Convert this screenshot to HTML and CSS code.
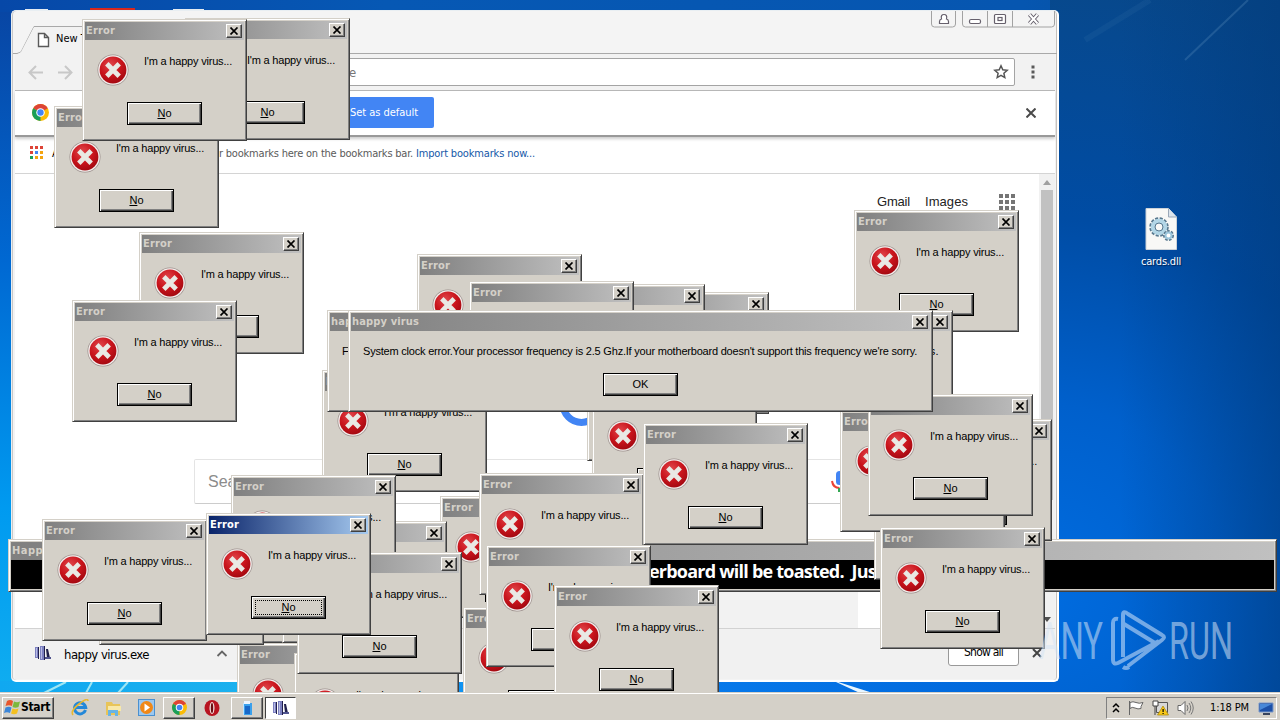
FILE: index.html
```html
<!DOCTYPE html>
<html lang="en">
<head>
<meta charset="utf-8">
<title>Desktop</title>
<link rel="stylesheet" href="styles.css">
</head>
<body>
<svg width="0" height="0" class="defs">
  <defs>
    <radialGradient id="red" cx=".4" cy=".3" r=".75"><stop offset="0" stop-color="#e0454a"/><stop offset=".55" stop-color="#c9141c"/><stop offset="1" stop-color="#a00810"/></radialGradient>
    <symbol id="err" viewBox="0 0 32 32">
      <circle cx="16" cy="16" r="15.5" fill="#9b8f8c"/><circle cx="16" cy="16" r="14.8" fill="#f3eeec"/><circle cx="16" cy="16" r="13.4" fill="url(#red)"/>
      <path d="M9.800 9.800 22.200 22.200M22.200 9.800 9.800 22.200" stroke="#e9e9e4" stroke-width="4.8"/>
    </symbol>
    <symbol id="chrome" viewBox="0 0 16 16">
      <circle cx="8" cy="8" r="8" fill="#fbbc05"/><path d="M8 8 1.1 4A8 8 0 0 1 14.9 4Z" fill="#dd4437"/><path d="M8 8 1.1 4A8 8 0 0 0 8 16Z" fill="#1a9f5a"/><circle cx="8" cy="8" r="4" fill="#fff"/><circle cx="8" cy="8" r="3" fill="#4285f4"/>
    </symbol>
    <symbol id="exe" viewBox="0 0 16 16">
      <path d="M0 2h3v11H0zM5 1h4v14H5z" fill="#7c80c0"/><path d="M3 2h1v12H3zM9 1h1v14H9zM11 4l2 0 2 9h-3z" fill="#20204c"/><path d="M6 2h1v12H6zM1 3h1v9H1z" fill="#b9bce4"/><path d="M10 12h6v2h-6z" fill="#50548e"/>
    </symbol>
  </defs>
</svg>
<div class="desktop">
  <svg class="wall" width="1280" height="720">
    <defs>
      <linearGradient id="lw" x2="0" y2="1"><stop offset="0" stop-color="#0846a4"/><stop offset=".35" stop-color="#0068d2"/><stop offset=".7" stop-color="#009af0"/><stop offset="1" stop-color="#12b0f0"/></linearGradient>
      <linearGradient id="tw"><stop offset="0" stop-color="#0648a8"/><stop offset=".3" stop-color="#0658b4"/><stop offset=".8" stop-color="#0656b0"/><stop offset="1" stop-color="#084a90"/></linearGradient>
      <linearGradient id="bw"><stop offset="0" stop-color="#10a8f0"/><stop offset=".3" stop-color="#20b4ee"/><stop offset=".5" stop-color="#0a84f4"/><stop offset="1" stop-color="#0064d8"/></linearGradient>
      <radialGradient id="rw" gradientUnits="userSpaceOnUse" cx="1040" cy="590" r="620"><stop offset="0" stop-color="#006ce0"/><stop offset=".3" stop-color="#0060cc"/><stop offset=".6" stop-color="#004ca4"/><stop offset="1" stop-color="#08488a"/></radialGradient>
      <linearGradient id="edge"><stop offset="0" stop-color="#003878" stop-opacity="0"/><stop offset="1" stop-color="#003878" stop-opacity=".5"/></linearGradient>
    </defs>
    <rect width="1280" height="720" fill="url(#tw)"/>
    <rect y="12" width="100" height="708" fill="url(#lw)"/>
    <rect x="1050" width="230" height="720" fill="url(#rw)"/>
    <rect x="1120" width="160" height="720" fill="url(#edge)"/>
    <rect y="681" width="1060" height="12" fill="url(#bw)"/>
    <path d="M1185 60 1248 0" stroke="#6fa0c8" stroke-opacity=".25" stroke-width="2"/>
    <path d="M1085 40 1150 0" stroke="#6fa0c8" stroke-opacity=".08" stroke-width="6"/>
    <path d="M832 680 876 694H862L836 682Z" fill="#e8f6ff"/>
    <path d="M44 693 66 682M86 693 92 682M118 693 128 682" stroke="#9fe6f4" stroke-width="2"/>
    <path d="M25 9h23v2H25zM173 9h31v3h-31z" fill="#e6ecf2"/><path d="M90 8h45v4H90z" fill="#d8281c"/>
  </svg>

  <section class="browser">
    <header class="tabs">
      <svg width="1046" height="43">
        <path d="M1 42.5H5L9 41 22 15.500H236L248 42.500H1045" fill="none" stroke="#a9a9a9"/>
        <path d="M6 43 9 41 22 16H236L248 43Z" fill="#f2f2f2"/>
        <path d="M26.500 22.500h6l4 4v9h-10zM32.500 22.500v4h4" fill="#fff" stroke="#5a5a5a" stroke-width="1.400"/>
        <g fill="none" stroke="#a2a2a2"><path d="M919.500 0V13q0 3 3 3h18q3 0 3-3V0M950.500 0V13q0 3 3 3h86q3 0 3-3V0M975.500 0V16M1000.500 0V16"/></g>
        <g fill="#fff" stroke="#66606c" stroke-width="1.200"><path d="M927.500 12.500v-2q0-2 2-2.500-1-4.500 2.500-4.500t2.500 4.500q2 .5 2 2.500v2z"/><rect x="957.500" y="8.500" width="11" height="4" rx="1.500"/><rect x="982.500" y="3.500" width="11" height="9" rx="1"/><rect x="986" y="6.500" width="4" height="3"/></g>
        <path d="m1017.500 3.500 8 9m0-9-8 9" stroke="#66606c" stroke-width="4"/><path d="m1017.500 3.500 8 9m0-9-8 9" stroke="#fff" stroke-width="2"/>
      </svg>
      <span class="tabname">New Tab</span>
    </header>
    <div class="toolbar">
      <svg width="70" height="36"><path d="M29 18.500H16M22 12l-6.500 6.500L22 25M44 18.500H57M51 12l6.500 6.500L51 25" fill="none" stroke="#c8c8c8" stroke-width="2"/></svg>
      <div class="omni"><span>e</span>
        <svg width="16" height="16" viewBox="0 0 16 16"><path d="m8 1.800 1.800 4 4.400.5-3.300 3 .9 4.300L8 11.400l-3.800 2.200.9-4.300-3.300-3 4.400-.5z" fill="none" stroke="#555" stroke-width="1.500"/></svg>
      </div>
      <svg class="dots" width="4" height="16"><path d="M.500 1.500h3v3h-3zM.500 6.500h3v3h-3zM.500 11.500h3v3h-3z" fill="#5a5a5a"/></svg>
    </div>
    <div class="infobar">
      <svg width="17" height="17"><use href="#chrome"/></svg>
      <div class="default"><span data-w="68">Set as default</span></div>
      <svg class="x" width="10" height="10"><path d="m.500.500 9 9m0-9-9 9" stroke="#4a4a4a" stroke-width="2"/></svg>
    </div>
    <div class="bookmarks">
      <svg width="14" height="14"><path d="M0 0h3v3H0zM5 0h3v3H5zM0 5h3v3H0z" fill="#dd4437"/><path d="M10 0h3v3h-3z" fill="#dd4437"/><path d="M5 5h3v3H5z" fill="#4285f4"/><path d="M10 5h3v3h-3zM5 10h3v3H5zM10 10h3v3h-3z" fill="#f4a410"/><path d="M0 10h3v3H0z" fill="#1a9f5a"/></svg>
      <span class="apps">Apps</span>
      <span class="hint" data-w="194">r bookmarks here on the bookmarks bar.</span>
      <span class="import" data-w="119">Import bookmarks now...</span>
    </div>
    <div class="page">
      <div class="canvas">
        <nav><span data-w="33">Gmail</span><span data-w="43">Images</span>
          <svg width="16" height="16"><path d="M0 0h4v4H0zM6 0h4v4H6zM12 0h4v4h-4zM0 6h4v4H0zM6 6h4v4H6zM12 6h4v4h-4zM0 12h4v4H0zM6 12h4v4H6zM12 12h4v4h-4z" fill="#757575"/></svg>
        </nav>
        <svg class="logo" width="60" height="60"><path d="M12 30A18.500 18.500 0 0 0 49 30" fill="none" stroke="#4285f4" stroke-width="7"/></svg>
        <div class="search"><span>Search Google</span>
          <svg width="16" height="24"><rect x="5" y="1" width="7" height="14" rx="3.500" fill="#4285f4"/><path d="M1 11q1 7 7.500 7" fill="none" stroke="#ea4335" stroke-width="2"/><path d="M7 18h3v4H7z" fill="#34a853"/></svg>
        </div>
        <div class="foot"></div>
      </div>
      <div class="scroll"><svg width="16" height="16"><path d="m4 11 4-5 4 5z" fill="#a0a0a0"/></svg><i></i><svg width="16" height="18"><path d="m4 7 4 5 4-5z" fill="#505050"/></svg></div>
    </div>
    <footer class="shelf">
      <svg width="16" height="16"><use href="#exe"/></svg>
      <span class="file" data-w="85">happy virus.exe</span>
      <svg class="chev" width="12" height="8"><path d="m1.500 7 4.500-4.500L10.500 7" fill="none" stroke="#666" stroke-width="1.800"/></svg>
      <div class="all"><span data-w="39">Show all</span></div>
      <svg width="10" height="10"><path d="m1 1 8 8m0-8-8 8" stroke="#444" stroke-width="2"/></svg>
    </footer>
  </section>

  <figure class="file-icon">
    <svg width="32" height="42" viewBox="0 0 32 42"><path d="M1 .500h22.500L31.500 9v32.500H1z" fill="#f8f8f6" stroke="#ccd2d8"/><path d="M23.500.500V9h8" fill="#dbe4ec" stroke="#9aa8b8"/><circle cx="14" cy="19" r="7" fill="none" stroke="#58788e" stroke-width="5.500" stroke-dasharray="2.500 1.200"/><circle cx="14" cy="19" r="6" fill="#f8f8f6" stroke="#b2d6e6" stroke-width="4.500"/><circle cx="14" cy="19" r="4" fill="none" stroke="#58788e"/><circle cx="23.500" cy="27.500" r="3.500" fill="none" stroke="#58788e" stroke-width="4" stroke-dasharray="2 1"/><circle cx="23.500" cy="27.500" r="3" fill="#fff" stroke="#9cc6dc" stroke-width="2"/></svg>
    <figcaption data-w="40">cards.dll</figcaption>
  </figure>

  <div id="windows"></div>

  <svg class="mark" width="200" height="70" viewBox="0 0 200 70">
    <g fill="#d5e4f5" fill-opacity=".55" font-family="Roboto, sans-serif" font-size="52" font-weight="400"><text x="1" y="54" textLength="64" lengthAdjust="spacingAndGlyphs">ANY</text><text x="131" y="54" textLength="64" lengthAdjust="spacingAndGlyphs">RUN</text></g>
    <path d="M80 15q-5-1-5 4V56q0 5 5 3L121 37M85 53V11q0-5 5-1L124 31q4 2 0 5L90 62M86 20 117 39M85 63q3 2 6 0" transform="translate(0 -1)" fill="none" stroke="#c2daf6" stroke-opacity=".6" stroke-width="4"/>
  </svg>

  <footer class="taskbar">
    <button class="start"><svg width="17" height="17" viewBox="0 0 17 17"><path d="M3 2q3-2 6 0L8 7Q5 5.500 1.500 7z" fill="#e8562c"/><path d="M10 2.500q3 1.500 6 0L14.500 8q-3 1.500-6 0z" fill="#7cb83c"/><path d="M1.500 8.500Q5 7 7.500 8.500L6 14q-3-1.500-6 0z" fill="#3c86d8"/><path d="M8.500 9.500q3 1.500 6 0L13 14.500q-3 1.500-6 0z" fill="#f4c020"/></svg><span data-w="29">Start</span></button>
    <div class="task plain ie"><svg width="18" height="18" viewBox="0 0 18 18"><path d="M14.500 11A5.600 5.600 0 1 1 14.700 8.500H5" fill="none" stroke="#2488d8" stroke-width="3"/><path d="M2 16Q-1 12 8 5T17 2" fill="none" stroke="#e8b830" stroke-width="1.600"/></svg></div>
    <div class="task plain"><svg width="18" height="18"><path d="M2 3h6l1 2h7v11H2z" fill="#e8c458"/><path d="M4 7h13v5H4z" fill="#f8e8a8"/><path d="M4 17v-6h10v6h-3v-3H7v3z" fill="#68b4e4"/></svg></div>
    <div class="task plain"><svg width="17" height="17"><rect x=".500" y=".500" width="16" height="16" fill="#9cc8f0" stroke="#4a90d0"/><circle cx="8.500" cy="8.500" r="6.500" fill="#f08818"/><path d="m6.500 4.500 5.500 4-5.500 4z" fill="#fff"/></svg></div>
    <div class="task raised"><svg width="15" height="15"><use href="#chrome"/></svg></div>
    <div class="task plain opera"><svg width="16" height="16"><ellipse cx="8" cy="8" rx="7.500" ry="8" fill="#b81420"/><ellipse cx="8" cy="8" rx="2.500" ry="6" fill="#f4e4e0"/><ellipse cx="8" cy="8" rx="1.200" ry="5" fill="#6c0a10"/></svg></div>
    <div class="task raised"><svg width="16" height="16"><path d="M4 3h9v12H4z" fill="#3aa0ec"/><path d="M5 1h6v3H5z" fill="#eef6ff"/><path d="M6 6h5v8H6z" fill="#1868c8"/><path d="M4 3h1v12H4z" fill="#bfe4ff"/></svg></div>
    <div class="task pressed"><svg width="16" height="16"><use href="#exe"/></svg></div>
    <div class="tray">
      <svg width="8" height="12"><path d="m1 5 3-3 3 3M1 10l3-3 3 3" fill="none" stroke="#000" stroke-width="1.500"/></svg>
      <svg width="16" height="16"><path d="M1.500 1v14M2 2.500q3-1.500 6 0t7 0l-2 4 0 2q-3 1-6-.500t-5 .500z" fill="#fff" stroke="#666"/></svg>
      <svg width="17" height="16"><path d="M4.500 2.500h11v10h-11z" fill="#d8d8d8" stroke="#555"/><path d="M1 1h5v5H1zM3 6v9" fill="#fff" stroke="#444"/><path d="m11 6 5.500 9h-11z" fill="#f8c818" stroke="#a88400" stroke-width=".7"/><path d="M10.500 9h1.200v3h-1.200zM10.500 13h1.200v1h-1.200z"/></svg>
      <svg width="17" height="16"><path d="M1 5.500h3l4-4v13l-4-4H1z" fill="#fff" stroke="#666"/><path d="M10 5q2 3 0 6M12 3q3.500 5 0 10M14 1.500q4.500 6.500 0 13" fill="none" stroke="#777"/></svg>
      <span data-w="39">1:18 PM</span>
      <svg width="16" height="16"><path d="M1 3h14v9H1z" fill="#1c50a8" stroke="#7a98c8"/><path d="M2 4h12l-12 6z" fill="#4888d8"/><path d="M5 13h7v2H5z" fill="#38445c"/></svg>
    </div>
  </footer>
</div>
<script src="windows.js"></script>
</body>
</html>
```
FILE: styles.css
```css
* { box-sizing: border-box; }
body { margin: 0; font: 11px "Liberation Sans", Arial, sans-serif; color: #000; }
svg { display: block; flex: none; }
.defs { position: absolute; }
[data-w] { white-space: nowrap; }
.desktop { position: relative; width: 1280px; height: 720px; overflow: hidden; }
.wall { position: absolute; inset: 0; }

.browser { position: absolute; z-index: 0; left: 11px; top: 10px; width: 1048px; height: 672px; border: 1px solid #e8eef2; border-right: 2px solid #fff; border-bottom: 2px solid #fff; border-radius: 5px; background: #f4f4f4; display: flex; flex-direction: column; padding: 0 2px 1px 3px; overflow: hidden; font-family: "DejaVu Sans Condensed", "DejaVu Sans", sans-serif; box-shadow: inset -1px 0 #c4c0bc, inset 1px 0 #c8c8c8; }
.tabs { height: 43px; margin: 0 -2px 0 -3px; position: relative; }
.tabname { position: absolute; left: 44px; top: 21px; }
.toolbar { height: 37px; background: #f2f2f2; border-bottom: 1px solid #b6b6b6; display: flex; align-items: center; }
.toolbar > svg:first-child { margin-left: -1px; }
.omni { flex: 1; height: 28px; margin-left: 5px; border: 1px solid #a4a4a4; border-radius: 2px; background: #fff; display: flex; align-items: center; padding-right: 5px; }
.omni span { flex: 1; padding-left: 259px; font-size: 13px; color: #777; }
.dots { margin: 0 20px 0 16px; }
.infobar { height: 46px; background: #fff; border-bottom: 2px solid #999; box-shadow: 0 2px 3px #ccc; z-index: 1; display: flex; align-items: center; padding: 0 0 1px 17px; }
.default { width: 110px; height: 31px; margin-left: 275px; border-radius: 2px; background: #4285f4; color: #fff; display: flex; align-items: center; padding-left: 26px; }
.infobar .x { margin-left: auto; margin-right: 19px; }
.bookmarks { height: 37px; background: #fff; border-bottom: 1px solid #d4d4d4; display: flex; align-items: center; padding-left: 15px; padding-bottom: 4px; color: #5a5a5a; }
.apps { width: 166px; margin-left: 8px; color: #000; }
.hint { margin-left: 1px; }
.import { margin-left: 3px; color: #1558a8; }
.page { flex: 1; background: #fff; display: flex; min-height: 0; }
.canvas { flex: 1; display: flex; flex-direction: column; min-width: 0; }
nav { display: flex; justify-content: flex-end; align-items: center; height: 16px; margin-top: 20px; padding-right: 24px; font: 13px/14px "Liberation Sans", sans-serif; color: #222; }
nav span { margin-right: 15px; padding-bottom: 1px; }
nav span + span { margin-right: 31px; }
.logo { margin: 164px 0 0 536px; }
.search { width: 666px; height: 45px; margin: 25px 0 0 179px; border: 1px solid #e4e4e4; border-bottom-color: #ccc; border-radius: 2px; display: flex; align-items: center; justify-content: space-between; padding: 0 12px 0 13px; font: 16px "Liberation Sans", sans-serif; color: #8c8c8c; }
.foot { width: 644px; margin: auto 0 0 199px; height: 36px; background: #f2f2f2; }
.scroll { width: 16px; background: #f1f1f1; display: flex; flex-direction: column; }
.scroll i { flex: 1; margin: 0 2px 110px 2px; background: #c1c1c1; }
.shelf { height: 51px; background: #f1f1f1; border-top: 1px solid #d2d2d2; display: flex; align-items: center; padding: 0 13px 3px 20px; font-size: 13px; }
.file { margin: 4px 67px 0 13px; }
.all { width: 71px; height: 26px; margin: 0 13px 0 auto; border: 1px solid #999; border-radius: 3px; background: #fff; display: flex; align-items: center; justify-content: center; font-size: 12px; padding-bottom: 2px; }

.file-icon { position: absolute; left: 1131px; top: 208px; width: 60px; margin: 0; display: flex; flex-direction: column; align-items: center; gap: 5px; font-family: "DejaVu Sans Condensed", sans-serif; color: #fff; text-shadow: 1px 1px 1px #002050; }

.win { position: absolute; width: 165px; height: 122px; background: #d4d0c8; border: 1px solid; border-color: #d4d0c8 #404040 #404040 #d4d0c8; box-shadow: inset 1px 1px #fff, inset -1px -1px #808080; padding: 2px; }
.bar { height: 18px; display: flex; align-items: center; justify-content: space-between; padding: 0 2px 1px 1px; background: linear-gradient(90deg, #808080, #c0c0c0); color: #d4d0c8; font: bold 11px "DejaVu Sans Condensed", "DejaVu Sans", sans-serif; overflow: hidden; }
.active .bar { background: linear-gradient(90deg, #0a246a, #a6caf0); color: #fff; }
.close { width: 16px; height: 14px; background: #d4d0c8; border: 1px solid; border-color: #fff #404040 #404040 #fff; box-shadow: inset -1px -1px #808080; padding: 2px 0 0 3px; flex: none; }
.msg { display: flex; gap: 15px; height: 32px; margin: 14px 0 16px 12px; line-height: 14px; }
.ok { width: 75px; height: 23px; margin: 0 auto; border: 1px solid #000; background: #d4d0c8; box-shadow: inset 1px 1px #fff, inset -1px -1px #404040, inset -2px -2px #808080; display: flex; align-items: center; justify-content: center; padding-bottom: 1px; }
.ok u { text-underline-offset: 1px; }
.active .ok span { width: 67px; height: 15px; border: 1px dotted #000; display: flex; justify-content: center; align-items: center; }
.alert { height: 102px; }
.alert .msg { height: 14px; margin: 13px 0 15px 12px; }
.marquee { width: 1269px; height: 53px; }
.marquee .close { display: none; }
.marquee .tape { height: 29px; background: #000; color: #fff; font: bold 18px/22px "Open Sans", "Noto Sans", sans-serif; padding-left: 638px; overflow: hidden; }
.mark { position: absolute; left: 1038px; top: 605px; }

.taskbar { position: absolute; left: 0; right: 0; bottom: 0; height: 28px; background: #d4d0c8; border-top: 1px solid #d4d0c8; box-shadow: inset 0 1px #fff; display: flex; align-items: center; padding: 2px 3px 0 2px; font-family: "DejaVu Sans Condensed", sans-serif; }
.start, .raised { background: #d4d0c8; border: 1px solid; border-color: #fff #404040 #404040 #fff; box-shadow: inset -1px -1px #808080; }
.start { width: 52px; height: 22px; margin-right: 10px; padding: 0 1px 1px; display: flex; align-items: center; gap: 0; font: bold 12px "DejaVu Sans Condensed", sans-serif; }
.task { width: 32px; height: 22px; margin-right: 2px; display: flex; align-items: center; justify-content: center; }
.plain { margin-right: 1px; }
.ie { margin-right: 1px; }
.opera { margin-right: 3px; margin-left: -1px; }
.pressed { width: 31px; background: #fff; border: 1px solid; border-color: #404040 #fff #fff #404040; }
.tray { width: 171px; height: 22px; margin-left: auto; border: 1px solid; border-color: #808080 #fff #fff #808080; display: flex; align-items: center; padding: 0 0 0 5px; }
.tray svg { margin-right: 8px; }
.tray span { margin: 0 9px 0 8px; }
.tray svg:last-child { margin: 0; }
```
FILE: windows.js
```js
const X = '<div class="close"><svg width="9" height="8"><path d="m.5.5 7 7m0-7-7 7" stroke="#000" stroke-width="1.7"/></svg></div>';
const root = document.getElementById('windows');

function add(cls, x, y, w, html) {
  const el = document.createElement('div');
  el.className = 'win ' + cls;
  el.style.left = x + 'px';
  el.style.top = y + 'px';
  if (w) el.style.width = w + 'px';
  el.innerHTML = html;
  root.append(el);
}
function error(x, y, cls = '') {
  add(cls, x, y, 0, `<div class="bar"><span data-w="29">Error</span>${X}</div>
    <div class="msg"><svg width="32" height="32"><use href="#err"/></svg><span data-w="88">I'm a happy virus...</span></div>
    <div class="ok"><span><u>N</u>o</span></div>`);
}
function alertBox(x, w, text, tw) {
  add('alert', x, 310, w, `<div class="bar"><span data-w="67">happy virus</span>${X}</div>
    <div class="msg"><span data-w="${tw}">${text}</span></div><div class="ok"><span>OK</span></div>`);
}

// Stacking follows creation order, back to front.
add('marquee', 8, 539, 0, '<div class="bar"><span data-w="72">Happy virus</span></div><div class="tape"><span data-w="234">erboard will be toasted.&nbsp; Just</span></div>');
[[874, 458], [887, 419], [840, 410], [854, 210], [185, 18], [54, 106], [82, 19], [139, 232], [72, 300],
 [604, 292], [540, 284], [417, 254], [469, 281], [587, 339], [322, 370], [592, 385]].forEach(p => error(...p));
alertBox(327, 626, 'Failed to detect the processor fan.Your processor temperature is above the limit.Please check the cooling systems.', 597);
error(868, 394);
alertBox(348, 585, "System clock error.Your processor frequency is 2.5 Ghz.If your motherboard doesn't support this frequency we're sorry.", 554);
[[237, 643], [294, 653], [215, 521], [99, 523], [440, 496], [282, 521], [231, 475], [297, 552], [42, 519]].forEach(p => error(...p));
error(206, 513, 'active');
[[463, 607], [479, 473], [643, 423], [486, 545], [554, 585], [880, 527]].forEach(p => error(...p));

// Spread each label over its design width.
document.querySelectorAll('[data-w]').forEach(el => {
  el.style.display = 'inline-block';
  const natural = el.getBoundingClientRect().width;
  el.style.letterSpacing = (el.dataset.w - natural) / el.textContent.length + 'px';
});
```
